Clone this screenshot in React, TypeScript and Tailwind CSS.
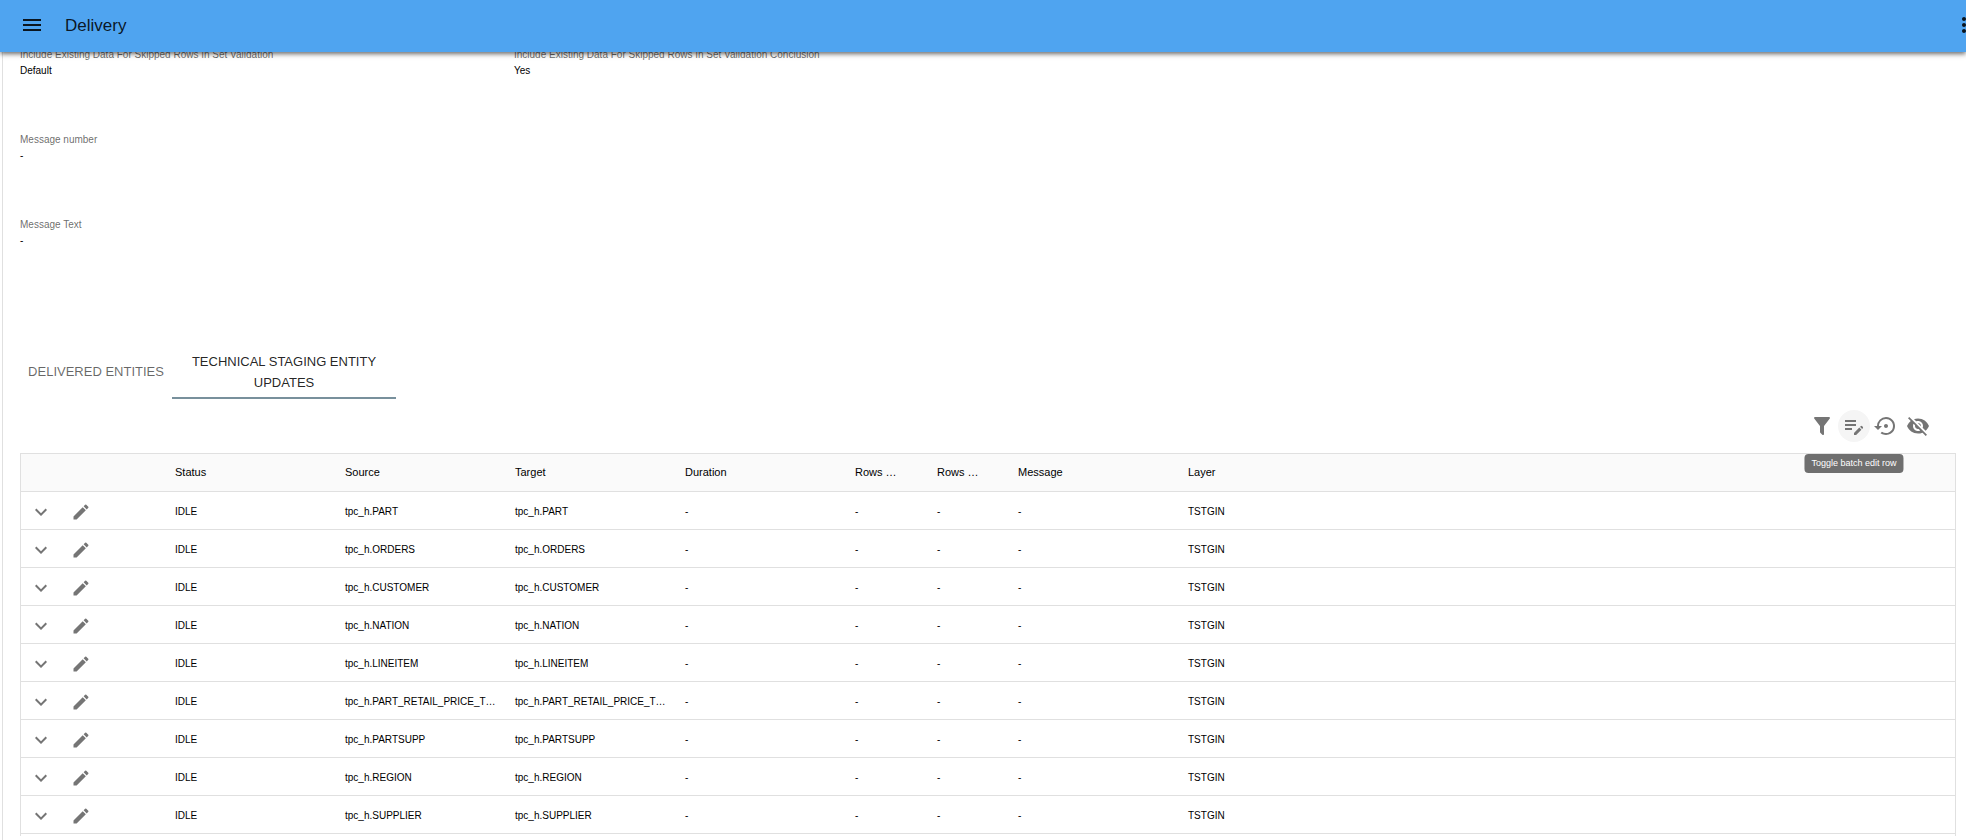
// pages/Delivery.tsx
import {
  MdEdit,
  MdEditNote,
  MdExpandMore,
  MdMenu,
  MdMoreVert,
  MdSettingsBackupRestore,
  MdVisibilityOff,
} from 'react-icons/md';

const details = [
  [
    { label: 'Include Existing Data For Skipped Rows In Set Validation', value: 'Default' },
    { label: 'Include Existing Data For Skipped Rows In Set Validation Conclusion', value: 'Yes' },
  ],
  [{ label: 'Message number', value: '-' }],
  [{ label: 'Message Text', value: '-' }],
];

const columns = [
  { id: 'status', title: 'Status', width: 'w-[170px]' },
  { id: 'source', title: 'Source', width: 'w-[170px]' },
  { id: 'target', title: 'Target', width: 'w-[170px]' },
  { id: 'duration', title: 'Duration', width: 'w-[170px]' },
  { id: 'rows1', title: 'Rows …', width: 'w-[82px]' },
  { id: 'rows2', title: 'Rows …', width: 'w-[81px]' },
  { id: 'message', title: 'Message', width: 'w-[170px]' },
  { id: 'layer', title: 'Layer', width: '' },
];

const entities = [
  'tpc_h.PART',
  'tpc_h.ORDERS',
  'tpc_h.CUSTOMER',
  'tpc_h.NATION',
  'tpc_h.LINEITEM',
  'tpc_h.PART_RETAIL_PRICE_T…',
  'tpc_h.PARTSUPP',
  'tpc_h.REGION',
  'tpc_h.SUPPLIER',
];

function FilterIcon() {
  return (
    <svg viewBox="0 0 24 24" className="size-6" fill="currentColor" aria-hidden="true">
      <path d="M14 12v7.88c.04.3-.06.62-.29.83-.39.39-1.02.39-1.41 0l-2.01-2.01c-.23-.23-.33-.54-.29-.83V12h-.03L4.21 4.62c-.34-.43-.26-1.06.17-1.4.19-.14.4-.22.62-.22h14c.22 0 .43.08.62.22.43.34.51.97.17 1.4L14.03 12H14z" />
    </svg>
  );
}

function AppBar() {
  return (
    <header className="relative z-10 flex h-[52px] items-center overflow-x-clip bg-[#4fa4f0] px-5 pb-0.5 text-black/87 shadow-[0_2px_4px_-1px_rgba(0,0,0,0.4),0_3px_4px_0_rgba(0,0,0,0.2),0_1px_8px_0_rgba(0,0,0,0.15)]">
      <button type="button" aria-label="Open menu">
        <MdMenu className="size-6" />
      </button>
      <h1 className="ml-[21px] pt-0.5 text-[17px] leading-6">Delivery</h1>
      <button type="button" aria-label="More" className="-mr-[30px] ml-auto">
        <MdMoreVert className="size-6" />
      </button>
    </header>
  );
}

function Toolbar() {
  const button = 'flex size-8 items-center justify-center rounded-full';
  return (
    <div className="flex pr-[22px] text-[#757575]">
      <button type="button" aria-label="Filter" className={button}>
        <FilterIcon />
      </button>
      <div className="relative">
        <button type="button" aria-describedby="edit-tip" aria-label="Batch edit" className={`${button} bg-[#f5f5f5]`}>
          <MdEditNote className="size-6" />
        </button>
        {/* Tooltip */}
        <div
          id="edit-tip"
          role="tooltip"
          className="absolute top-11 left-1/2 -translate-x-1/2 rounded bg-[#6f6f6f] px-[7px] py-[3px] text-[9px] leading-[13px] whitespace-nowrap text-white"
        >
          Toggle batch edit row
        </div>
      </div>
      <button type="button" aria-label="Reset" className={button}>
        <MdSettingsBackupRestore className="size-6" />
      </button>
      <button type="button" aria-label="Hide" className={button}>
        <MdVisibilityOff className="size-6" />
      </button>
    </div>
  );
}

function UpdatesTable() {
  return (
    <table className="w-full table-fixed border-separate border-spacing-0 border-x border-t border-[#e0e0e0] pb-0.5 text-left text-[10px] text-black">
      <thead>
        <tr className="h-[38px] bg-[#fafafa] text-[11px]">
          <th className="w-10 border-b border-[#e0e0e0]" aria-label="Expand" />
          <th className="w-[104px] border-b border-[#e0e0e0]" aria-label="Edit" />
          {columns.map((col) => (
            <th
              key={col.id}
              className={`border-b border-[#e0e0e0] px-2.5 font-medium whitespace-nowrap ${col.width}`}
            >
              {col.title}
            </th>
          ))}
        </tr>
      </thead>
      <tbody className="[&_td]:border-b [&_td]:border-[#e0e0e0] [&_td]:pt-0.5 [&_td]:pb-0">
        {entities.map((name) => (
          <tr key={name} className="h-[38px]">
            <td className="px-0 text-[#757575]">
              <button type="button" aria-label={`Expand ${name}`} className="flex w-full justify-center">
                <MdExpandMore className="size-6" />
              </button>
            </td>
            <td className="px-0 text-[#757575]">
              <button type="button" aria-label={`Edit ${name}`} className="flex w-10 justify-center">
                <MdEdit className="size-5" />
              </button>
            </td>
            <td className="px-2.5">IDLE</td>
            <td className="pr-1 pl-2.5 whitespace-nowrap">{name}</td>
            <td className="pr-1 pl-2.5 whitespace-nowrap">{name}</td>
            <td className="px-2.5">-</td>
            <td className="px-2.5">-</td>
            <td className="px-2.5">-</td>
            <td className="px-2.5">-</td>
            <td className="px-2.5">TSTGIN</td>
          </tr>
        ))}
      </tbody>
    </table>
  );
}

export default function App() {
  return (
    <div className="min-h-screen overflow-x-clip bg-white font-['Liberation_Sans',Arial,sans-serif] text-black/87">
      <AppBar />
      <main className="ml-0.5 min-h-[calc(100vh-52px)] border-l border-[#e0e0e0] pr-2.5 pb-1 pl-[17px]">
        {/* Details, scrolled partly under the bar */}
        <div className="-mt-[5px]">
          {details.map((row) => (
            <dl key={row[0].label} className="grid h-[85px] grid-cols-4 gap-x-10 text-[10px] leading-4">
              {row.map((item) => (
                <div key={item.label}>
                  <dt className="text-black/60">{item.label}</dt>
                  <dd className="text-black">{item.value}</dd>
                </div>
              ))}
            </dl>
          ))}
        </div>

        {/* Tabs */}
        <div role="tablist" className="mt-[45px] flex h-[52px] text-[13px] leading-[21px]">
          <button
            type="button"
            role="tab"
            aria-selected="false"
            className="w-38 border-b-2 border-transparent pb-0.5 text-black/60"
          >
            DELIVERED ENTITIES
          </button>
          <button
            type="button"
            role="tab"
            aria-selected="true"
            className="w-56 border-b-2 border-[#78909c] px-2.5"
          >
            TECHNICAL STAGING ENTITY UPDATES
          </button>
        </div>

        <div className="mt-[11px] mb-[11px] flex justify-end">
          <Toolbar />
        </div>
        <UpdatesTable />
      </main>
    </div>
  );
}
